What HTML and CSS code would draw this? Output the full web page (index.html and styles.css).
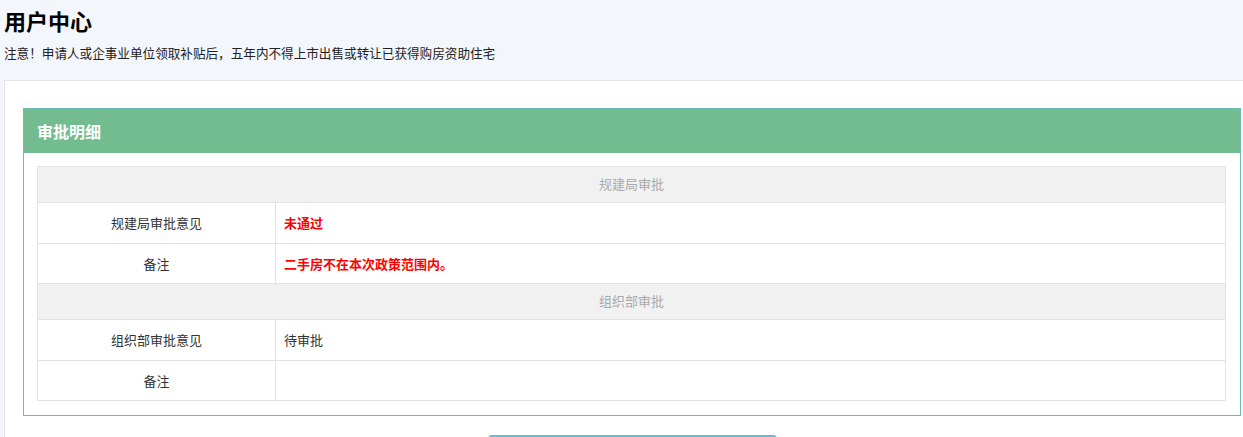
FILE: index.html
```html
<!DOCTYPE html>
<html lang="zh-CN">
<head>
  <meta charset="UTF-8" />
  <meta name="viewport" content="width=device-width, initial-scale=1.0" />
  <title>用户中心</title>
  <link rel="stylesheet" href="styles.css">
</head>
<body>
  <div class="page-head">
    <h1>用户中心</h1>
    <p class="notice">注意！申请人或企事业单位领取补贴后，五年内不得上市出售或转让已获得购房资助住宅</p>
  </div>

  <div class="content">
    <div class="panel">
      <div class="panel-heading">审批明细</div>
      <div class="panel-body">
        <table class="detail">
          <tr class="section">
            <td colspan="2">规建局审批</td>
          </tr>
          <tr>
            <td class="label">规建局审批意见</td>
            <td class="red">未通过</td>
          </tr>
          <tr>
            <td class="label">备注</td>
            <td class="red">二手房不在本次政策范围内。</td>
          </tr>
          <tr class="section">
            <td colspan="2">组织部审批</td>
          </tr>
          <tr>
            <td class="label">组织部审批意见</td>
            <td>待审批</td>
          </tr>
          <tr>
            <td class="label">备注</td>
            <td></td>
          </tr>
        </table>
      </div>
    </div>
    <div class="actions">
      <button class="btn-info" aria-label="返回"></button>
    </div>
  </div>
</body>
</html>
```

FILE: styles.css
```css
body {
  margin: 0;
  background: #f3f6fb;
  font-family: "Noto Sans CJK SC", "Microsoft YaHei", sans-serif;
  font-size: 13px;
  color: #333;
  overflow: hidden;
}
.page-head {
  padding: 0 4px;
}
.page-head h1 {
  margin: 5px 0 0;
  font-size: 22px;
  line-height: 30px;
  font-weight: bold;
  color: #000;
}
.notice {
  margin: 8px 0 17px;
  font-size: 12.6px;
  line-height: 20px;
  color: #222;
}
.content {
  box-sizing: border-box;
  width: 1256px;
  margin-left: 4px;
  padding: 27px 18px 20px;
  background: #fff;
  border: 1px solid #e5e5e5;
}
.panel {
  border: 1px solid #6bbdb3;
}
.panel-heading {
  height: 44px;
  line-height: 44px;
  padding-left: 13px;
  background: #73bc90;
  color: #fff;
  font-size: 16px;
  font-weight: bold;
}
.panel-body {
  padding: 13px 14px 14px 13px;
}
.detail {
  width: 100%;
  border-collapse: collapse;
  border: 1px solid #e3e3e3;
}
.detail td {
  border: 1px solid #e3e3e3;
  padding: 10px 8px 9.5px;
  line-height: 20px;
}
.detail .label {
  width: 221px;
  text-align: center;
}
.detail .section td {
  background: #f1f1f1;
  color: #aaa;
  text-align: center;
  padding: 7px 8px 8px;
}
.red {
  color: #f00;
  font-weight: bold;
}
.actions {
  text-align: center;
  padding-top: 19px;
}
.btn-info {
  width: 289px;
  height: 34px;
  border: none;
  border-radius: 4px;
  background: #5bc0de;
}
```
